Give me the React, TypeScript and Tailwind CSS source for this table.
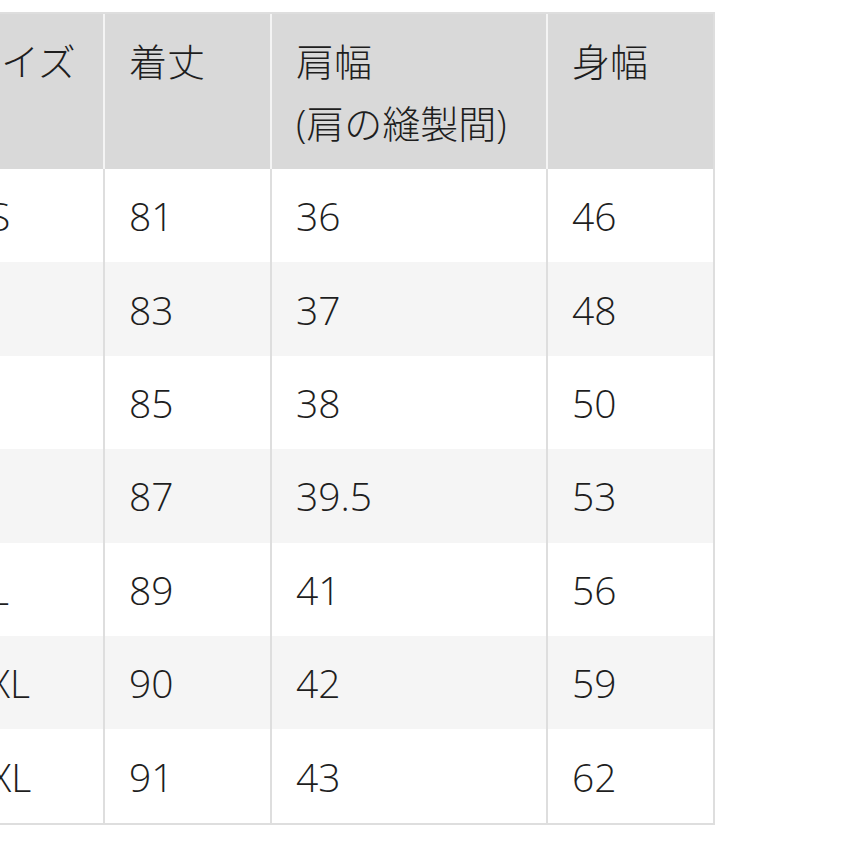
import React from "react";

const rows: [string, string, string, string][] = [
  ["XS", "81", "36", "46"],
  ["S", "83", "37", "48"],
  ["M", "85", "38", "50"],
  ["L", "87", "39.5", "53"],
  ["XL", "89", "41", "56"],
  ["XXL", "90", "42", "59"],
  ["3XL", "91", "43", "62"],
];

const widths = ["w-[170px]", "w-[167px]", "w-[276px]", "w-[167px]"];

export default function App() {
  return (
    <div
      className="w-[862px] h-[862px] bg-white overflow-hidden text-[#1e1e1e] font-light"
      style={{ fontFamily: '"Open Sans", "Noto Sans CJK JP", sans-serif' }}
    >
      <div className="ml-[-65px] mt-[12px] w-[780px] border-t-2 border-b-2 border-[#dedede]">
        <div className="flex bg-[#d9d9d9] h-[155px]">
          {["サイズ", "着丈", "肩幅\n(肩の縫製間)", "身幅"].map((h, i) => (
            <div
              key={i}
              className={`${widths[i]} shrink-0 border-r-2 ${i === 3 ? "border-[#dedede]" : "border-[#f4f4f4]"} ${i === 0 ? "pl-[28px]" : "pl-[24px]"} pt-[16px] text-[38px] leading-[62px] whitespace-pre-line`}
            >
              {h}
            </div>
          ))}
        </div>
        {rows.map((r, ri) => (
          <div
            key={ri}
            className={`flex h-[93.4px] ${ri % 2 === 1 ? "bg-[#f5f5f5]" : "bg-white"}`}
          >
            {r.map((c, ci) => (
              <div
                key={ci}
                className={`${widths[ci]} shrink-0 border-r-2 border-[#dedede] ${ci === 0 ? "pl-[33px]" : "pl-[24px]"} flex items-center text-[39px] leading-none`}
              >
                {c}
              </div>
            ))}
          </div>
        ))}
      </div>
    </div>
  );
}
